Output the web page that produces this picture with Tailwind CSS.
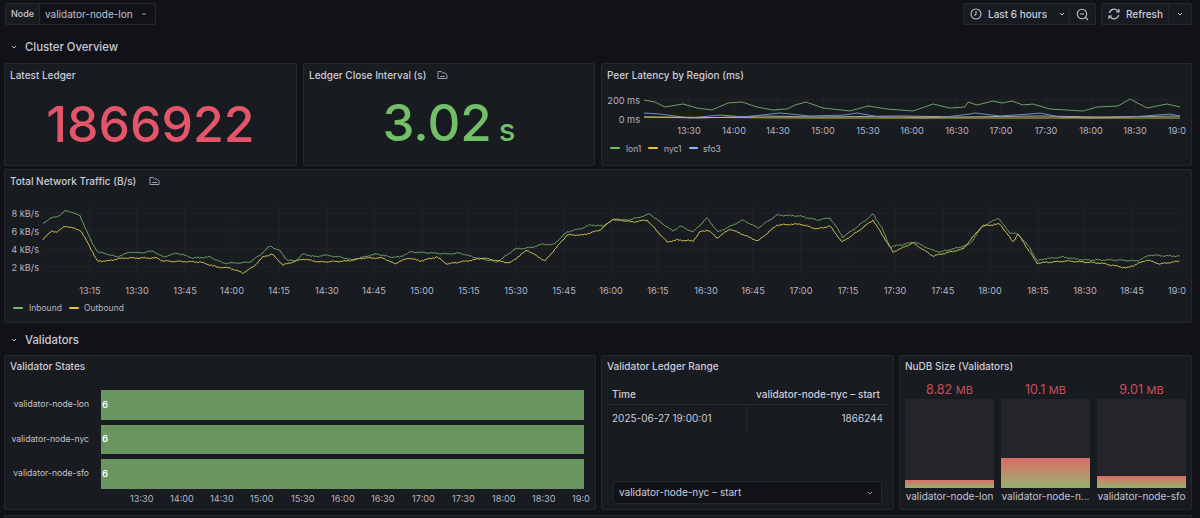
<!DOCTYPE html>
<html lang="en">
<head>
  <meta charset="UTF-8" />
  <title>Validator dashboard</title>
  <script src="https://cdn.jsdelivr.net/npm/@tailwindcss/browser@4"></script>
</head>
<body class="bg-[#111217] text-[#ccccdc] font-['Inter',sans-serif] w-[1200px] h-[518px] overflow-hidden whitespace-nowrap">

  <!-- TOOLBAR -->
  <header class="flex justify-between items-center h-[22px] mt-[3px] pl-[5px] pr-[8px]">
    <div class="flex h-[22px] border border-[#25282d] rounded-[2px] text-[10px]">
      <div class="flex items-center px-[5px] w-[34px] bg-[#181b1f] border-r border-[#25282d] text-[9px] font-medium">Node</div>
      <div class="flex items-center pl-[5px] gap-[6px] w-[115px] text-[#c0c0cf]">
        validator-node-lon
        <svg class="w-[10px] h-[10px]" viewBox="0 0 10 10" fill="none" stroke="#9a9aa8" stroke-width="1"><path d="M3 4l2 2 2-2"/></svg>
      </div>
    </div>
    <div class="flex gap-[5px] text-[10px] font-medium">
      <div class="flex h-[22px] w-[133px] bg-[#181b1f] border border-[#25282d] rounded-[2px]">
        <div class="flex flex-1 items-center pl-[6px] gap-[6px]">
          <svg class="w-[12px] h-[12px]" viewBox="0 0 12 12" fill="none" stroke="#c0c0cf" stroke-width="1.100"><circle cx="6" cy="6" r="5"/><path d="M6 3v3.200L4.300 7.600"/></svg>
          <span>Last 6 hours</span>
          <svg class="w-[10px] h-[10px] ml-[4px]" viewBox="0 0 10 10" fill="none" stroke="#c0c0cf" stroke-width="1"><path d="M3 4l2 2 2-2"/></svg>
        </div>
        <div class="flex items-center justify-center w-[26px] border-l border-[#25282d]">
          <svg class="w-[13px] h-[13px]" viewBox="0 0 13 13" fill="none" stroke="#c0c0cf" stroke-width="1.100"><circle cx="6" cy="6" r="4.700"/><path d="M4 6h4M9.500 9.500L12 12"/></svg>
        </div>
      </div>
      <div class="flex h-[22px] w-[91px] bg-[#181b1f] border border-[#25282d] rounded-[2px]">
        <div class="flex flex-1 items-center pl-[6px] gap-[6px]">
          <svg class="w-[12px] h-[12px]" viewBox="0 0 12 12" fill="none" stroke="#c0c0cf" stroke-width="1.200"><path d="M1.300 5A4.800 4.800 0 0 1 9.600 2.800L11 4M10.700 7A4.800 4.800 0 0 1 2.400 9.200L1 8"/><path d="M11 1v3H8M1 11V8h3"/></svg>
          <span>Refresh</span>
        </div>
        <div class="flex items-center justify-center w-[23px] border-l border-[#25282d]">
          <svg class="w-[10px] h-[10px]" viewBox="0 0 10 10" fill="none" stroke="#c0c0cf" stroke-width="1"><path d="M3 4l2 2 2-2"/></svg>
        </div>
      </div>
    </div>
  </header>

  <!-- CLUSTER OVERVIEW -->
  <div class="flex items-center h-[20px] mt-[12px] pl-[9px] gap-[6px] text-[11.3px] font-medium text-[#c9c9d6]">
    <svg class="w-[10px] h-[10px]" viewBox="0 0 10 10" fill="none" stroke="#c0c0cf" stroke-width="1"><path d="M3 4l2 2 2-2"/></svg>
    Cluster Overview
  </div>

  <div class="grid grid-cols-[293px_292px_591px] gap-x-[6px] h-[101px] mt-[6px] ml-[4px]">
    <section class="bg-[#181b1f] border border-[#25282d] rounded-[2px] flex flex-col">
      <h2 class="text-[10px] font-medium leading-[14px] mt-[4px] ml-[5px]">Latest Ledger</h2>
      <div class="flex-1 flex items-center justify-center text-[50px] font-medium leading-none text-[#e3566a]">1866922</div>
    </section>
    <section class="bg-[#181b1f] border border-[#25282d] rounded-[2px] flex flex-col">
      <h2 class="flex items-center gap-[11px] text-[10px] font-medium leading-[14px] mt-[4px] ml-[5px]">
        Ledger Close Interval (s)
        <svg class="w-[11px] h-[10px]" viewBox="0 0 11 10" fill="none" stroke="#9a9aa8" stroke-width="1"><path d="M1 8.500V1.500h3.500l1 1.500H8l2 2v3.500z"/><path d="M3 6.500h5"/></svg>
      </h2>
      <div class="flex items-baseline justify-center text-[51px] font-medium leading-[70px] mt-[6px] text-[#73bf69]">3.02<span class="text-[31px] ml-[7px]">s</span></div>
    </section>
    <section class="bg-[#181b1f] border border-[#25282d] rounded-[2px] relative">
      <h2 class="text-[10px] font-medium leading-[14px] mt-[4px] ml-[5px]">Peer Latency by Region (ms)</h2>
      <svg class="absolute top-[-1px] left-[-1px] text-[9.2px]" width="591" height="101" viewBox="601 63 591 101" fill="none">
        <g stroke="#212429"><path d="M644 100H1180M644 120H1180M689 96V124M734 96V124M778 96V124M823 96V124M868 96V124M912 96V124M957 96V124M1001 96V124M1046 96V124M1091 96V124M1135 96V124"/></g>
        <g class="fill-[#b5b5c3]" text-anchor="end"><text x="640" y="103.500">200 ms</text><text x="640" y="123">0 ms</text></g>
        <g class="fill-[#b5b5c3]" text-anchor="middle">
          <text x="689" y="133.500">13:30</text><text x="734" y="133.500">14:00</text><text x="778" y="133.500">14:30</text><text x="823" y="133.500">15:00</text><text x="868" y="133.500">15:30</text><text x="912" y="133.500">16:00</text><text x="957" y="133.500">16:30</text><text x="1001" y="133.500">17:00</text><text x="1046" y="133.500">17:30</text><text x="1091" y="133.500">18:00</text><text x="1135" y="133.500">18:30</text><text x="1177" y="133.500">19:0</text>
        </g>
        <polyline stroke="#a9a9a0" points="644,117 700,118 760,116 820,117 900,116 960,117 1040,116 1100,117 1180,116"/>
        <polyline stroke="#6f8fc4" points="644,113 660,114 690,118 720,115 745,117 780,113 810,116 845,115 857,113 880,117 900,117 925,118 945,117 970,114 975,113 1000,116 1030,114 1040,113 1060,117 1090,118 1130,117 1145,116 1170,114 1180,116"/>
        <polyline stroke="#c9b840" points="644,117 800,118 1000,118 1180,118"/>
        <polyline stroke="#6f9e66" points="644,100 655,102 665,107 683,104 697,108 712,110 728,103 742,102 757,107 773,110 787,109 795,105 806,102 823,108 850,111 868,106 887,109 913,111 933,104 950,108 965,107 968,102 977,105 993,101 1002,103 1012,101 1023,105 1033,104 1050,109 1083,111 1097,107 1118,106 1130,99 1147,108 1167,104 1180,107"/>
        <g stroke-width="2" stroke-linecap="round"><path stroke="#73bf69" d="M611 148h8"/><path stroke="#e6c93c" d="M649 148h8"/><path stroke="#8ab8ff" d="M690 148h7"/></g>
        <g class="fill-[#b5b5c3] text-[8.500px]"><text x="626" y="151.500">lon1</text><text x="664" y="151.500">nyc1</text><text x="703" y="151.500">sfo3</text></g>
      </svg>
    </section>
  </div>

  <section class="relative bg-[#181b1f] border border-[#25282d] rounded-[2px] h-[154px] mt-[5px] ml-[4px] mr-[8px]">
    <h2 class="flex items-center gap-[13px] text-[10px] font-medium leading-[14px] pt-[4px] ml-[5px]">
      Total Network Traffic (B/s)
      <svg class="w-[11px] h-[10px]" viewBox="0 0 11 10" fill="none" stroke="#9a9aa8" stroke-width="1"><path d="M1 8.500V1.500h3.500l1 1.500H8l2 2v3.500z"/><path d="M3 6.500h5"/></svg>
    </h2>
    <svg class="absolute top-[-1px] left-[-1px] text-[9.2px]" width="1188" height="154" viewBox="4 169 1188 154" fill="none">
      <g stroke="#212429"><path d="M43 213H1180M43 231H1180M43 249H1180M43 267H1180M90 204V276M137 204V276M185 204V276M232 204V276M279 204V276M327 204V276M374 204V276M422 204V276M469 204V276M516 204V276M564 204V276M611 204V276M658 204V276M706 204V276M753 204V276M801 204V276M848 204V276M895 204V276M943 204V276M990 204V276M1038 204V276M1085 204V276M1132 204V276"/></g>
      <g class="fill-[#b5b5c3]" text-anchor="end"><text x="39" y="217">8 kB/s</text><text x="39" y="235">6 kB/s</text><text x="39" y="253">4 kB/s</text><text x="39" y="271">2 kB/s</text></g>
      <g class="fill-[#b5b5c3]" text-anchor="middle">
        <text x="90" y="294">13:15</text><text x="137" y="294">13:30</text><text x="185" y="294">13:45</text><text x="232" y="294">14:00</text><text x="279" y="294">14:15</text><text x="327" y="294">14:30</text><text x="374" y="294">14:45</text><text x="422" y="294">15:00</text><text x="469" y="294">15:15</text><text x="516" y="294">15:30</text><text x="564" y="294">15:45</text><text x="611" y="294">16:00</text><text x="658" y="294">16:15</text><text x="706" y="294">16:30</text><text x="753" y="294">16:45</text><text x="801" y="294">17:00</text><text x="848" y="294">17:15</text><text x="895" y="294">17:30</text><text x="943" y="294">17:45</text><text x="990" y="294">18:00</text><text x="1038" y="294">18:15</text><text x="1085" y="294">18:30</text><text x="1132" y="294">18:45</text><text x="1177" y="294">19:0</text>
      </g>
      <polyline id="inbound" stroke="#6f9e66" points=""/>
      <polyline id="outbound" stroke="#cfc150" points=""/>
      <g stroke-width="2" stroke-linecap="round"><path stroke="#73bf69" d="M14 308h8"/><path stroke="#e6c93c" d="M70 308h8"/></g>
      <g class="fill-[#b5b5c3] text-[8.500px]"><text x="29" y="311">Inbound</text><text x="84" y="311">Outbound</text></g>
    </svg>
  </section>

  <!-- VALIDATORS -->
  <div class="flex items-center h-[20px] mt-[7px] pl-[9px] gap-[6px] text-[11.3px] font-medium text-[#c9c9d6]">
    <svg class="w-[10px] h-[10px]" viewBox="0 0 10 10" fill="none" stroke="#c0c0cf" stroke-width="1"><path d="M3 4l2 2 2-2"/></svg>
    Validators
  </div>

  <div class="grid grid-cols-[592px_293px_293px] gap-x-[5px] h-[155px] mt-[5px] ml-[4px]">
    <section class="bg-[#181b1f] border border-[#25282d] rounded-[2px] flex flex-col">
      <h2 class="text-[10px] font-medium leading-[14px] mt-[3px] ml-[5px]">Validator States</h2>
      <div class="mt-[17px] flex flex-col gap-[5px] text-[8.6px] text-[#c4c4d0]">
        <div class="flex items-center gap-[12px]"><span class="w-[84px] text-right">validator-node-lon</span><div class="flex items-center w-[483px] h-[29.500px] bg-[#689560] pl-[1px] text-[9.5px] font-semibold text-white">6</div></div>
        <div class="flex items-center gap-[12px]"><span class="w-[84px] text-right">validator-node-nyc</span><div class="flex items-center w-[483px] h-[29.500px] bg-[#689560] pl-[1px] text-[9.5px] font-semibold text-white">6</div></div>
        <div class="flex items-center gap-[12px]"><span class="w-[84px] text-right">validator-node-sfo</span><div class="flex items-center w-[483px] h-[29.500px] bg-[#689560] pl-[1px] text-[9.5px] font-semibold text-white">6</div></div>
      </div>
      <div class="relative h-[14px] mt-[3px] text-[9.2px] text-[#b5b5c3]">
        <span class="absolute left-[125px]">13:30</span><span class="absolute left-[165px]">14:00</span><span class="absolute left-[205px]">14:30</span><span class="absolute left-[245px]">15:00</span><span class="absolute left-[286px]">15:30</span><span class="absolute left-[326px]">16:00</span><span class="absolute left-[366px]">16:30</span><span class="absolute left-[407px]">17:00</span><span class="absolute left-[447px]">17:30</span><span class="absolute left-[487px]">18:00</span><span class="absolute left-[527px]">18:30</span><span class="absolute left-[567px]">19:0</span>
      </div>
    </section>

    <section class="bg-[#181b1f] border border-[#25282d] rounded-[2px] flex flex-col">
      <h2 class="text-[10px] font-medium leading-[14px] mt-[3px] ml-[5px]">Validator Ledger Range</h2>
      <div class="mt-[14px] ml-[5px] mr-[5px] text-[10px]">
        <div class="flex justify-between h-[18px] pl-[5px] pr-[8px] border-b border-[#25282d] font-medium">
          <span>Time</span><span>validator-node-nyc – start</span>
        </div>
        <div class="flex h-[26px] items-center">
          <div class="w-[140px] h-full pl-[5px] flex items-center border-r border-[#25282d]">2025-06-27 19:00:01</div>
          <div class="flex-1 text-right pr-[5px]">1866244</div>
        </div>
      </div>
      <div class="flex items-center justify-between h-[23px] mt-auto mb-[5px] mx-[11px] pl-[5px] pr-[6px] bg-[#111217] border border-[#25282d] rounded-[2px] text-[10px]">
        validator-node-nyc – start
        <svg class="w-[10px] h-[10px]" viewBox="0 0 10 10" fill="none" stroke="#9a9aa8" stroke-width="1"><path d="M3 4l2 2 2-2"/></svg>
      </div>
    </section>

    <section class="bg-[#181b1f] border border-[#25282d] rounded-[2px] flex flex-col">
      <h2 class="text-[10px] font-medium leading-[14px] mt-[3px] ml-[5px]">NuDB Size (Validators)</h2>
      <div class="grid grid-cols-3 gap-x-[7px] mx-[5px] mt-[7px]">
        <div class="flex flex-col min-w-0">
          <div class="text-center text-[12.5px] leading-[18px] pt-[1px] h-[19px] text-[#c9505c]">8.82 <span class="text-[11px]">MB</span></div>
          <div class="flex flex-col justify-end h-[89px] bg-[#23252b]"><div class="h-[8px] bg-gradient-to-b from-[#d96a68] to-[#8fb06f]"></div></div>
          <div class="text-center text-[10px] mt-[1px] truncate text-[#c4c4d0]">validator-node-lon</div>
        </div>
        <div class="flex flex-col min-w-0">
          <div class="text-center text-[12.5px] leading-[18px] pt-[1px] h-[19px] text-[#c9505c]">10.1 <span class="text-[11px]">MB</span></div>
          <div class="flex flex-col justify-end h-[89px] bg-[#23252b]"><div class="h-[30px] bg-gradient-to-b from-[#d96a68] to-[#8fb06f]"></div></div>
          <div class="text-center text-[10px] mt-[1px] truncate text-[#c4c4d0]">validator-node-n...</div>
        </div>
        <div class="flex flex-col min-w-0">
          <div class="text-center text-[12.5px] leading-[18px] pt-[1px] h-[19px] text-[#c9505c]">9.01 <span class="text-[11px]">MB</span></div>
          <div class="flex flex-col justify-end h-[89px] bg-[#23252b]"><div class="h-[12px] bg-gradient-to-b from-[#d96a68] to-[#8fb06f]"></div></div>
          <div class="text-center text-[10px] mt-[1px] truncate text-[#c4c4d0]">validator-node-sfo</div>
        </div>
      </div>
    </section>
  </div>

  <!-- next row, cut off by the window -->
  <div class="h-[10px] mt-[5px] ml-[4px] mr-[8px] bg-[#181b1f] border border-[#25282d]"></div>

  <script>
    // traffic series, sampled by hand, then roughened so it reads like real metrics
    var inbound = [43,224,50,218,57,217,65,211,72,212,80,216,85,227,92,243,98,252,107,254,117,257,130,252,140,253,153,251,163,257,177,253,193,258,210,257,223,263,240,263,250,262,260,255,270,246,280,251,287,260,295,261,303,254,317,257,323,255,340,257,353,260,367,256,377,254,390,257,400,257,410,252,433,253,447,254,460,253,473,257,497,262,503,258,515,249,527,248,533,247,543,244,553,245,567,232,583,228,590,225,603,226,613,220,627,220,637,218,650,214,660,222,673,231,680,226,693,232,707,218,718,232,733,225,743,220,758,228,777,215,800,216,817,220,830,218,843,237,857,227,873,214,882,228,890,247,900,245,915,242,932,250,940,252,957,248,970,244,982,227,998,218,1010,233,1018,234,1030,248,1037,261,1043,259,1063,257,1083,260,1117,260,1137,261,1150,255,1167,256,1180,256];
    var outbound = [43,239,52,231,57,232,65,226,80,230,88,243,97,261,107,261,123,258,140,258,157,258,163,261,200,262,217,267,230,268,243,273,253,267,263,257,272,254,283,265,293,262,303,259,320,262,347,261,363,258,383,258,395,264,400,261,410,258,420,261,437,257,447,264,473,260,483,258,510,263,527,250,545,261,567,235,583,235,600,230,613,219,633,222,647,220,667,242,677,240,693,241,700,232,708,230,717,238,730,229,758,241,777,225,800,224,817,229,830,226,842,242,857,232,873,220,893,252,913,243,933,256,963,249,982,226,1000,224,1013,242,1018,234,1037,263,1067,261,1100,263,1127,268,1147,260,1160,264,1180,261];

    function roughen(pts, seed) {
      var out = [];
      for (var i = 0; i < pts.length - 2; i += 2) {
        var x0 = pts[i], y0 = pts[i + 1], x1 = pts[i + 2], y1 = pts[i + 3];
        for (var x = x0; x < x1; x += 1.6) {
          var t = (x - x0) / (x1 - x0);
          var y = y0 + (y1 - y0) * t + Math.sin(x * 1.7 + seed) * 0.5 + Math.sin(x * 0.53 + seed) * 0.4;
          out.push(x.toFixed(1) + ',' + y.toFixed(1));
        }
      }
      return out.join(' ');
    }
    document.getElementById('inbound').setAttribute('points', roughen(inbound, 1));
    document.getElementById('outbound').setAttribute('points', roughen(outbound, 4));
  </script>
</body>
</html>
